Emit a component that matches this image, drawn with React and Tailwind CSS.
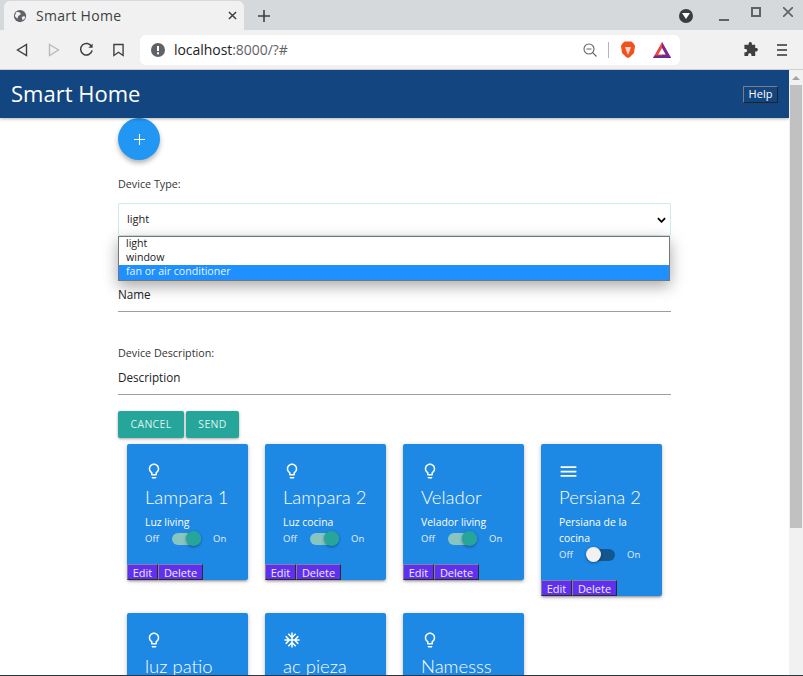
const BULB = "M9 21c0 .55.45 1 1 1h4c.55 0 1-.45 1-1v-1H9v1zm3-19C8.14 2 5 5.14 5 9c0 2.38 1.19 4.47 3 5.74V17c0 .55.45 1 1 1h6c.55 0 1-.45 1-1v-2.26c1.81-1.27 3-3.36 3-5.74 0-3.86-3.14-7-7-7zm2.85 11.1l-.85.6V16h-4v-2.3l-.85-.6C7.8 12.16 7 10.63 7 9c0-2.76 2.24-5 5-5s5 2.24 5 5c0 1.63-.8 3.16-2.15 4.1z";
const SNOW = "M22 11h-4.17l3.24-3.24-1.41-1.42L15 11h-2V9l4.66-4.66-1.42-1.41L13 6.17V2h-2v4.17L7.76 2.93 6.34 4.34 11 9v2H9L4.34 6.34 2.93 7.76 6.17 11H2v2h4.17l-3.24 3.24 1.41 1.42L9 13h2v2l-4.66 4.66 1.42 1.41L11 17.83V22h2v-4.17l3.24 3.24 1.42-1.41L13 15v-2h2l4.66 4.66 1.41-1.42L17.83 13H22z";
const MENU = "M3 18h18v-2H3v2zm0-5h18v-2H3v2zm0-7v2h18V6H3z";

const devices = [
  { icon: BULB, title: "Lampara 1", desc: "Luz living", on: true },
  { icon: BULB, title: "Lampara 2", desc: "Luz cocina", on: true },
  { icon: BULB, title: "Velador", desc: "Velador living", on: true },
  { icon: MENU, title: "Persiana 2", desc: "Persiana de la cocina", on: false, wide: true },
  { icon: BULB, title: "luz patio", desc: "Luz patio", on: true },
  { icon: SNOW, title: "ac pieza", desc: "Aire", on: false },
  { icon: BULB, title: "Namesss", desc: "Description", on: true },
];

function Toggle({ on }) {
  return (
    <div className="mt-[1px] flex items-center h-[15px] text-[9.5px] leading-[15px] text-[#e3f0fb]">
      <span className="w-[27px]">Off</span>
      <span className={`relative w-[29px] h-[12px] rounded-full ${on ? "bg-[#86c5c0]" : "bg-[#14578f]"}`}>
        <span className={`absolute top-[-1.5px] w-[15px] h-[15px] rounded-full shadow-[0_1px_3px_rgba(0,0,0,0.4)] ${on ? "left-[14px] bg-[#26a69a]" : "left-0 bg-[#f1f1f1]"}`} />
      </span>
      <span className="ml-[12px]">On</span>
    </div>
  );
}

function Card({ d }) {
  return (
    <div className="w-[121px] bg-[#1e88e5] rounded-[2px] shadow-[0_2px_2px_rgba(0,0,0,0.14),0_3px_1px_-2px_rgba(0,0,0,0.12),0_1px_5px_rgba(0,0,0,0.2)] text-white flex flex-col">
      <div className="pt-[18px] px-[18px] pb-[18px] grow">
        <div className="h-[18px] flex items-center">
          <svg viewBox="0 0 24 24" className={d.wide ? "w-[21px] h-[21px] ml-[-1px] shrink-0" : "w-[18px] h-[18px] shrink-0"} fill="currentColor"><path d={d.icon} /></svg>
        </div>
        <div className="mt-[1px] text-[18.5px] leading-[32px] font-light font-['Lato',sans-serif] whitespace-nowrap">{d.title}</div>
        <div className="mt-[1px] text-[10.4px] leading-[16px]">{d.desc}</div>
        <Toggle on={d.on} />
      </div>
      <div className="flex h-[16px] text-[11px] leading-[13px] text-[#f0eaff]">
        <button className="w-[31px] h-[16px] bg-[#6030f0] border-t border-l border-t-[#8a7f96] border-l-[#8a7f96] border-r border-b border-r-[#2b2b2b] border-b-[#2b2b2b]">Edit</button>
        <button className="w-[45px] h-[16px] bg-[#6030f0] border-t border-l border-t-[#8a7f96] border-l-[#8a7f96] border-r border-b border-r-[#2b2b2b] border-b-[#2b2b2b]">Delete</button>
      </div>
    </div>
  );
}

function BrowserChrome() {
  return (
    <div className="h-[70px] shrink-0 flex flex-col bg-[#d6d9dc] font-['Open_Sans',sans-serif] border-b border-[#cfcfcf]">
      <div className="h-[30px] flex items-end pl-[4px]">
        <div className="w-[240px] h-[29px] bg-[#f1f1f1] rounded-t-[6px] flex items-center pl-[9px] pr-[7px] text-[14px] text-[#3c4043]">
          <svg viewBox="0 0 16 16" className="w-[14px] h-[14px] mr-[9px]"><circle cx="8" cy="8" r="7" fill="#5f6368" /><path d="M4 3l4 1 1 2-3 2-1 3-3-3zM10 9l3-1 1 2-3 3z" fill="#f1f1f1" /></svg>
          <span className="grow tracking-[0.3px]">Smart Home</span>
          <svg viewBox="0 0 10 10" className="w-[9px] h-[9px]" stroke="#3c4043" strokeWidth="1.6"><path d="M1 1l8 8M9 1l-8 8" /></svg>
        </div>
        <svg viewBox="0 0 12 12" className="w-[12px] h-[12px] ml-[14px] mb-[8px]" stroke="#3c4043" strokeWidth="1.6"><path d="M6 0v12M0 6h12" /></svg>
        <div className="grow" />
        <div className="w-[14px] h-[14px] mb-[7px] rounded-full bg-[#3c3c3c] flex items-center justify-center mr-[26px]">
          <svg viewBox="0 0 8 6" className="w-[8px] h-[6px]"><path d="M0 0h8L4 6z" fill="#fff" /></svg>
        </div>
        <div className="w-[10px] h-[2px] mb-[9px] bg-[#5f6368] mr-[22px]" />
        <div className="w-[10px] h-[10px] mb-[13px] border-2 border-[#5f6368] mr-[22px]" />
        <svg viewBox="0 0 10 10" className="w-[10px] h-[10px] mb-[13px] mr-[10px]" stroke="#5f6368" strokeWidth="1.6"><path d="M0 0l10 10M10 0L0 10" /></svg>
      </div>
      <div className="h-[39px] bg-[#f1f1f1] flex items-center">
        <div className="w-[140px] flex items-center shrink-0">
          <svg viewBox="0 0 12 14" className="w-[12px] h-[14px] ml-[16px]" fill="none" stroke="#3c4043" strokeWidth="1.4"><path d="M10.5 1.5v11L1.5 7z" /></svg>
          <svg viewBox="0 0 12 14" className="w-[12px] h-[14px] ml-[20px]" fill="none" stroke="#b9bbbd" strokeWidth="1.4"><path d="M1.5 1.5v11l9-5.5z" /></svg>
          <svg viewBox="0 0 16 16" className="w-[15px] h-[15px] ml-[19px]" fill="none" stroke="#3c4043" strokeWidth="1.6"><path d="M13.5 5A6.2 6.2 0 1 0 14 9" /><path d="M14.5 1.5V6H10z" fill="#3c4043" stroke="none" /></svg>
          <svg viewBox="0 0 12 14" className="w-[11px] h-[14px] ml-[19px]" fill="none" stroke="#3c4043" strokeWidth="1.5"><path d="M1 1h10v12L6 9.5 1 13z" /></svg>
        </div>
        <div className="w-[540px] h-[30px] bg-white rounded-[6px] flex items-center pl-[11px] pr-[9px] text-[14px]">
          <span className="w-[18px] h-[14px] mr-[5px]"><svg viewBox="0 0 14 14" className="w-[14px] h-[14px]"><circle cx="7" cy="7" r="7" fill="#5f6368" /><rect x="6" y="3" width="2" height="5" fill="#fff" /><rect x="6" y="9.3" width="2" height="2" fill="#fff" /></svg></span>
          <span className="text-[#202124] tracking-[-0.05px]">localhost<span className="text-[#5f6368]">:8000/?#</span></span>
          <div className="grow" />
          <svg viewBox="0 0 14 14" className="w-[14px] h-[14px]" fill="none" stroke="#5f6368" strokeWidth="1.1"><circle cx="6" cy="6" r="5" /><path d="M3.5 6h5M9.7 9.7l3.8 3.8" /></svg>
          <div className="w-px h-[16px] bg-[#b5b5b5] ml-[11px] mr-[11px]" />
          <svg viewBox="0 0 16 18" className="w-[16px] h-[18px]"><path d="M2 3l2.5-2.5h7L14 3l1 2-1 7-4 4-2 1-2-1-4-4-1-7z" fill="#f1521d" /><path d="M5 6h6l-1 3-2 5-2-5z" fill="#fff" opacity="0.75" /></svg>
          <svg viewBox="0 0 18 16" className="w-[18px] h-[16px] ml-[17px]"><path d="M9 0l9 16H0z" fill="#e8483f" /><path d="M9 0l9 16H9z" fill="#7a2a8f" /><path d="M0 16h18l-1.5-2.6H1.5z" fill="#6a2c91" /><path d="M9 6l3.7 6.5H5.3z" fill="#fff" /></svg>
        </div>
        <svg viewBox="0 0 16 16" className="w-[15px] h-[15px] ml-[63px]" fill="#3c4043"><path d="M6 1.5a1.8 1.8 0 0 1 3.5 0V3H13v3.5h1.5a1.8 1.8 0 0 1 0 3.5H13v5H9v-1.5a1.8 1.8 0 0 0-3.5 0V15H1.5v-4H3a1.8 1.8 0 0 0 0-3.5H1.5V3H6z" /></svg>
        <div className="ml-[19px] flex flex-col gap-[3px]">
          <div className="w-[10px] h-[2px] bg-[#5f6368]" />
          <div className="w-[10px] h-[2px] bg-[#5f6368]" />
          <div className="w-[10px] h-[2px] bg-[#5f6368]" />
        </div>
      </div>
    </div>
  );
}

export default function App() {
  return (
    <div className="h-[676px] w-[803px] flex flex-col overflow-hidden bg-white font-['Open_Sans',sans-serif] text-[#212121]">
      <BrowserChrome />
      <div className="flex h-[605px] overflow-hidden">
        <div className="w-[789px] shrink-0 overflow-hidden">
          <header className="relative z-10 h-[48px] bg-[#134580] shadow-[0_1px_3px_rgba(0,0,0,0.3)] flex items-center justify-between pl-[11px] pr-[11px]">
            <span className="text-[22px] text-white mb-[2px]">Smart Home</span>
            <button className="w-[35px] h-[17px] bg-[#134580] text-[11px] leading-[14px] text-white border-t border-l border-t-[#7d7d7d] border-l-[#7d7d7d] border-r border-b border-r-[#222] border-b-[#222]">Help</button>
          </header>
          <main className="w-[553px] mx-auto">
            <button className="w-[42px] h-[42px] rounded-full bg-[#2196f3] text-white flex items-center justify-center shadow-[0_3px_5px_rgba(0,0,0,0.3)]">
              <svg viewBox="0 0 12 12" className="w-[11px] h-[11px]" stroke="#fff" strokeWidth="1.2"><path d="M6 0v12M0 6h12" /></svg>
            </button>
            <div className="mt-[16px] text-[10.75px] leading-[16px] text-[#333]">Device Type:</div>
            <div className="relative mt-[11px]">
              <div className="h-[33px] border border-[#cdebea] rounded-[2px] flex items-center justify-between pl-[8px] pr-[4px] text-[11px]">
                <span>light</span>
                <svg viewBox="0 0 10 6" className="w-[9px] h-[6px]" fill="none" stroke="#000" strokeWidth="2"><path d="M1 1l4 4 4-4" /></svg>
              </div>
              <div className="absolute top-[33px] left-0 w-[552px] border border-[#767676] bg-white shadow-[0_5px_15px_rgba(0,0,0,0.35)] text-[10.6px] text-[#222] z-20">
                <div className="pl-[7px] h-[14px] leading-[13px]">light</div>
                <div className="pl-[7px] h-[14px] leading-[13px]">window</div>
                <div className="pl-[7px] h-[15px] leading-[13px] bg-[#1e90ff] text-[#eaf4ff]">fan or air conditioner</div>
              </div>
            </div>
            <div className="mt-[47px] h-[29px] pt-[2px] border-b border-[#9e9e9e] text-[11.7px] leading-[18px] text-[#222]">Name</div>
            <div className="mt-[33px] text-[10.75px] leading-[16px] text-[#333]">Device Description:</div>
            <div className="mt-[6px] h-[28px] pt-[1px] border-b border-[#9e9e9e] text-[11.7px] leading-[18px] text-[#222]">Description</div>
            <div className="mt-[16px] flex gap-[2px]">
              <button className="w-[66px] h-[27px] rounded-[2px] bg-[#26a69a] text-[#ddf3f0] text-[10.5px] tracking-[0.3px] shadow-[0_1px_3px_rgba(0,0,0,0.35)]">CANCEL</button>
              <button className="w-[53px] h-[27px] rounded-[2px] bg-[#26a69a] text-[#ddf3f0] text-[10.5px] tracking-[0.3px] shadow-[0_1px_3px_rgba(0,0,0,0.35)]">SEND</button>
            </div>
          </main>
          <section className="mt-[6px] ml-[127px] w-[540px] flex flex-wrap items-start gap-[17px]">
            {devices.map((d) => <Card key={d.title} d={d} />)}
          </section>
        </div>
        <aside className="w-[14px] shrink-0 bg-[#f1f1f1] flex flex-col items-center">
          <svg viewBox="0 0 8 4" className="w-[8px] h-[4px] mt-[6px]"><path d="M4 0l4 4H0z" fill="#a3a3a3" /></svg>
          <div className="w-[12px] h-[443px] mt-[5px] bg-[#c1c1c1]" />
        </aside>
      </div>
      <div className="h-px bg-[#2d3540] shrink-0" />
    </div>
  );
}
